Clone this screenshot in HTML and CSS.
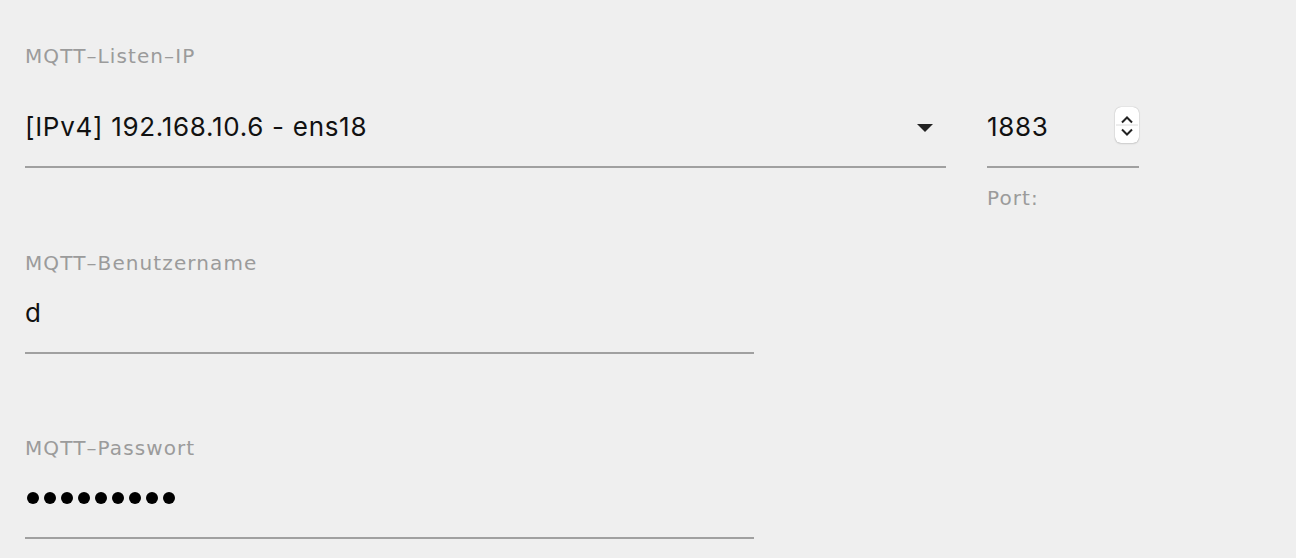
FILE: index.html
```html
<!DOCTYPE html>
<html lang="de">
<head>
  <meta charset="UTF-8" />
  <meta name="viewport" content="width=device-width, initial-scale=1.0" />
  <title>MQTT Einstellungen</title>
  <link rel="stylesheet" href="styles.css">
</head>
<body>
  <div class="row first">
    <div class="field wide">
      <div class="label">MQTT–Listen–IP</div>
      <div class="control select">
        <span class="value">[IPv4] 192.168.10.6 - ens18</span>
        <span class="arrow"></span>
      </div>
    </div>
    <div class="field port">
      <div class="label hidden">&nbsp;</div>
      <div class="control">
        <span class="value">1883</span>
        <span class="spinner">
          <svg width="24" height="36" viewBox="0 0 24 36">
            <path d="M7 15.5 L12 10.5 L17 15.5" fill="none" stroke="#222" stroke-width="2"/>
            <line x1="1" y1="18" x2="23" y2="18" stroke="#dcdcdc" stroke-width="1"/>
            <path d="M7 22.5 L12 27.5 L17 22.5" fill="none" stroke="#222" stroke-width="2"/>
          </svg>
        </span>
      </div>
      <div class="helper">Port:</div>
    </div>
  </div>

  <div class="field medium user">
    <div class="label">MQTT–Benutzername</div>
    <div class="control tight">
      <span class="value">d</span>
    </div>
  </div>

  <div class="field medium pass">
    <div class="label">MQTT–Passwort</div>
    <div class="control tight">
      <span class="dots">
        <i></i><i></i><i></i><i></i><i></i><i></i><i></i><i></i><i></i>
      </span>
    </div>
  </div>
</body>
</html>
```

FILE: styles.css
```css
body {
  margin: 0;
  padding: 44px 25px 0 25px;
  background-color: #efefef;
  font-family: Inter, "Liberation Sans", Arial, sans-serif;
  color: #111;
}
.row {
  display: flex;
  gap: 41px;
}
.field.wide {
  width: 921px;
}
.field.port {
  width: 152px;
}
.field.medium {
  width: 729px;
}
.label {
  font-family: "DejaVu Sans", sans-serif;
  font-size: 20px;
  line-height: 24px;
  letter-spacing: 1.1px;
  color: #9b9b9b;
}
.hidden {
  visibility: hidden;
}
.control {
  display: flex;
  align-items: center;
  justify-content: space-between;
  height: 44px;
  margin-top: 37px;
  padding-bottom: 17px;
  border-bottom: 2px solid #a0a0a0;
}
.control.tight {
  margin-top: 16px;
}
.value {
  font-size: 26px;
  line-height: 44px;
  letter-spacing: 0.7px;
}
.arrow {
  width: 0;
  height: 0;
  margin-right: 13px;
  margin-top: 2px;
  border-left: 8px solid transparent;
  border-right: 8px solid transparent;
  border-top: 8px solid #222;
}
.spinner {
  width: 24px;
  height: 36px;
  margin-top: -4px;
  background: #fff;
  border-radius: 6px;
  box-shadow: 0 0 1px rgba(0, 0, 0, 0.35), 0 1px 2px rgba(0, 0, 0, 0.12);
}
.spinner svg {
  display: block;
}
.helper {
  margin-top: 18px;
  font-family: "DejaVu Sans", sans-serif;
  font-size: 20px;
  line-height: 24px;
  letter-spacing: 1.1px;
  color: #9b9b9b;
}
.user {
  margin-top: 41px;
}
.pass {
  margin-top: 82px;
}
.dots {
  display: flex;
  gap: 5px;
  margin-left: 2px;
}
.dots i {
  width: 12px;
  height: 12px;
  border-radius: 50%;
  background: #000;
}
```
